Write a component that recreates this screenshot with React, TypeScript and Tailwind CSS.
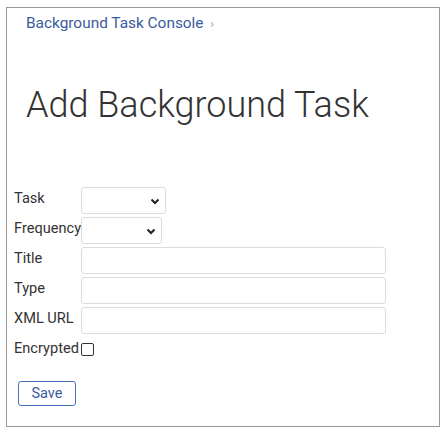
import React from "react";

const ChevronDown = () => (
  <svg width="10" height="7" viewBox="0 0 10 7" className="pointer-events-none absolute right-[6px] top-[11px]">
    <path d="M1.5 1.5 L5 5 L8.5 1.5" fill="none" stroke="#222" strokeWidth="2" />
  </svg>
);

const SelectBox = ({ width }: { width: string }) => (
  <div className={`relative h-[27px] ${width}`}>
    <select className="h-full w-full appearance-none rounded-[3px] border border-[#dcdcdc] bg-white" />
    <ChevronDown />
  </div>
);

const App = () => {
  return (
    <main className="min-h-[432px] bg-white pl-[6px] pt-[7px] font-['Roboto',sans-serif]">
      <section className="h-[420px] w-[434px] border border-[#9a9a9a] px-[7px]">
        <nav className="mt-[5px] h-[20px] pl-[12px] text-[15.4px] leading-[20px] text-[#3b5b9c]">
          Background Task Console <span className="ml-[3px] text-[12px] leading-[20px] text-[#8aa0c8]">›</span>
        </nav>
        <h1 className="mt-[52px] pl-[12px] text-[36px] font-light leading-[40px] text-[#333]">Add Background Task</h1>

        <form className="mt-[62px] grid grid-cols-[max-content_1fr] gap-y-[3px] text-[14.6px] leading-[20px] text-[#333]">
          <label className="pt-[1px]">Task</label>
          <SelectBox width="w-[85px]" />

          <label className="pt-[1px]">Frequency</label>
          <SelectBox width="w-[81px]" />

          <label className="pt-[1px]">Title</label>
          <input type="text" className="h-[27px] w-[305px] rounded-[3px] border border-[#dcdcdc]" />

          <label className="pt-[1px]">Type</label>
          <input type="text" className="h-[27px] w-[305px] rounded-[3px] border border-[#dcdcdc]" />

          <label className="pt-[1px]">XML URL</label>
          <input type="text" className="h-[27px] w-[305px] rounded-[3px] border border-[#dcdcdc]" />

          <label className="pt-[1px]">Encrypted</label>
          <div className="pt-[4px]">
            <input type="checkbox" className="m-0 h-[13px] w-[13px] appearance-none rounded-[2px] border border-[#333] bg-white" />
          </div>
        </form>

        <button className="ml-[4px] mt-[20px] h-[25px] w-[58px] rounded-[3px] border border-[#4a70c0] text-[14.5px] text-[#3b5b9c]">
          Save
        </button>
      </section>
    </main>
  );
};

export default App;
